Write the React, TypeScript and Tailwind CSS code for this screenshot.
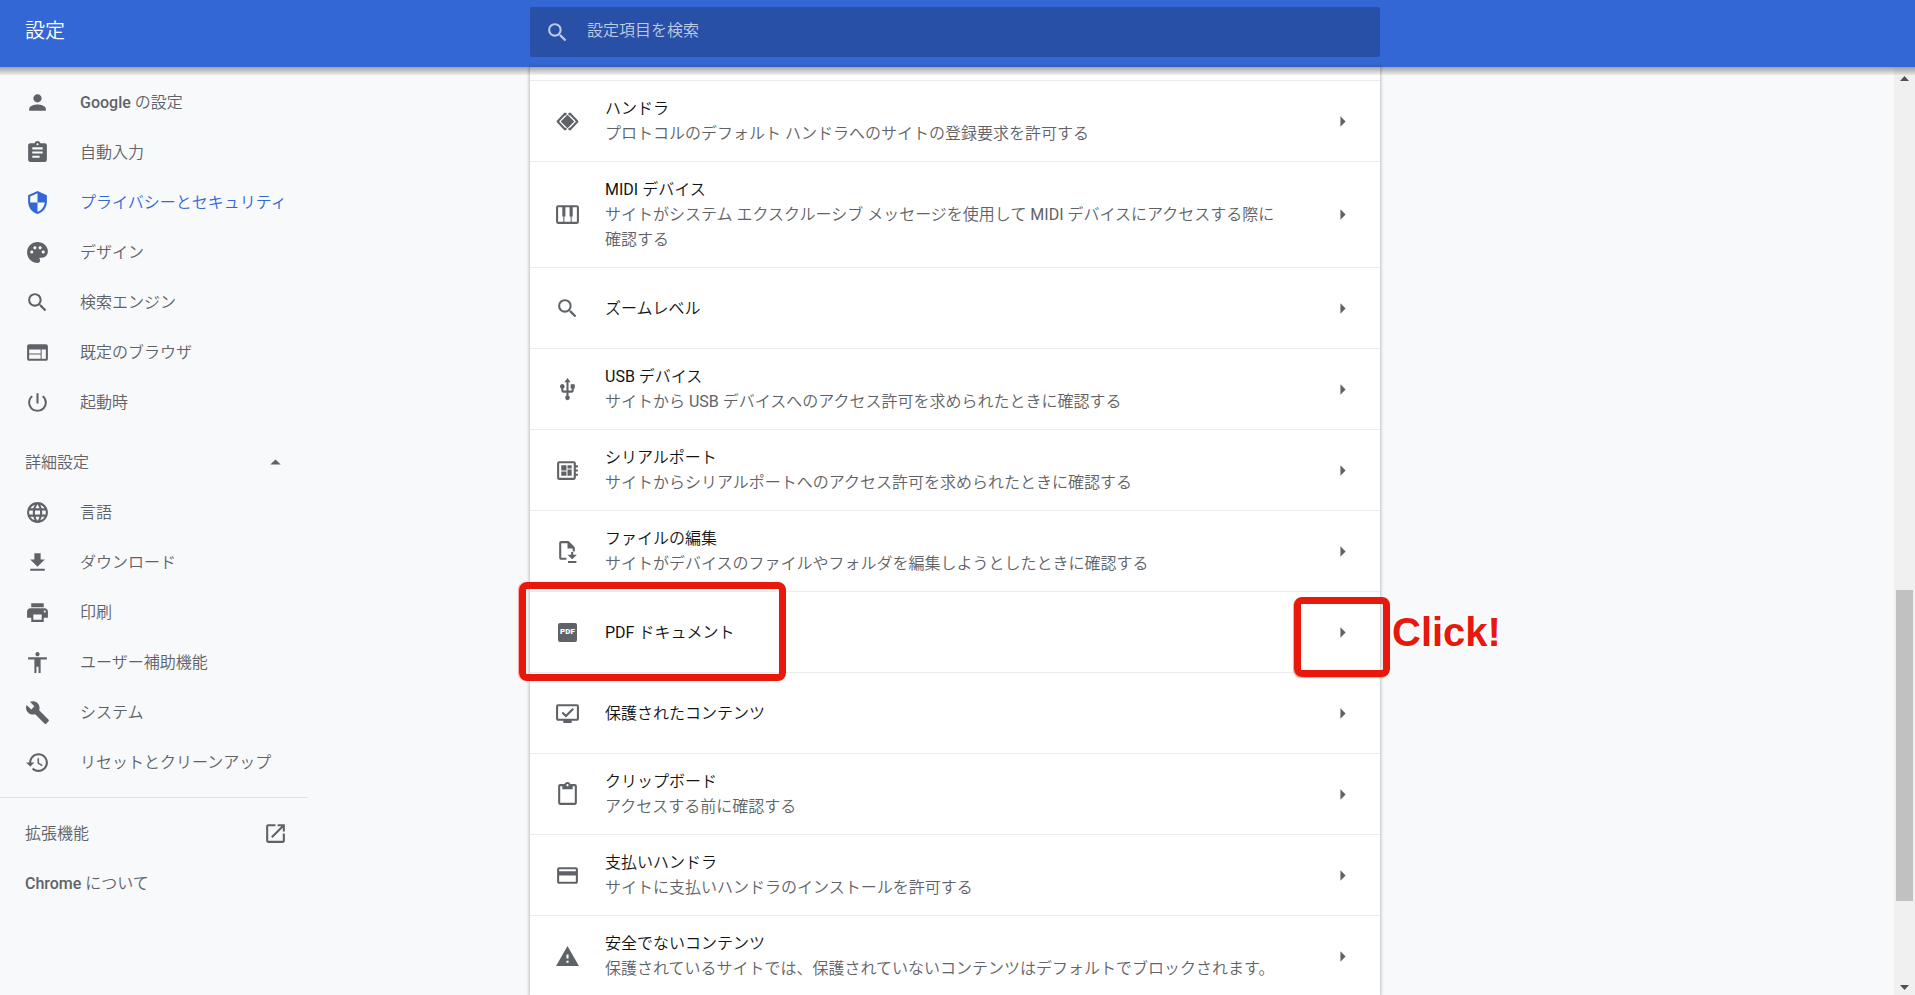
import type { ReactNode } from "react";
import {
  MdAccessibility,
  MdArrowDropUp,
  MdArrowRight,
  MdAssignment,
  MdBuild,
  MdContentPaste,
  MdCreditCard,
  MdDeveloperBoard,
  MdLanguage,
  MdOpenInNew,
  MdPalette,
  MdPerson,
  MdPowerSettingsNew,
  MdPrint,
  MdSearch,
  MdUsb,
  MdWarning,
  MdWeb,
} from "react-icons/md";

function Icon({ children }: { children: ReactNode }) {
  return (
    <svg viewBox="0 0 24 24" className="size-[25px]" fill="currentColor" aria-hidden="true">
      {children}
    </svg>
  );
}

const icon = "size-[25px]";

const basicItems = [
  { label: "Google の設定", icon: <MdPerson className={icon} /> },
  { label: "自動入力", icon: <MdAssignment className={icon} /> },
  {
    label: "プライバシーとセキュリティ",
    active: true,
    icon: (
      <Icon>
        <path d="M12 1L3 5v6c0 5.55 3.84 10.74 9 12 5.16-1.26 9-6.45 9-12V5l-9-4zm0 10.99h7c-.53 4.12-3.28 7.79-7 8.94V12H5V6.3l7-3.11v8.8z" />
      </Icon>
    ),
  },
  { label: "デザイン", icon: <MdPalette className={icon} /> },
  { label: "検索エンジン", icon: <MdSearch className={icon} /> },
  { label: "既定のブラウザ", icon: <MdWeb className={icon} /> },
  { label: "起動時", icon: <MdPowerSettingsNew className={icon} /> },
];

const advancedItems = [
  { label: "言語", icon: <MdLanguage className={icon} /> },
  {
    label: "ダウンロード",
    icon: (
      <Icon>
        <path d="M19 9h-4V3H9v6H5l7 7 7-7zM5 18v2h14v-2H5z" />
      </Icon>
    ),
  },
  { label: "印刷", icon: <MdPrint className={icon} /> },
  { label: "ユーザー補助機能", icon: <MdAccessibility className={icon} /> },
  { label: "システム", icon: <MdBuild className={icon} /> },
  {
    label: "リセットとクリーンアップ",
    icon: (
      <Icon>
        <path d="M13 3c-4.97 0-9 4.03-9 9H1l3.89 3.89.07.14L9 12H6c0-3.87 3.13-7 7-7s7 3.13 7 7-3.13 7-7 7c-1.93 0-3.68-.79-4.94-2.06l-1.42 1.42C8.27 19.99 10.51 21 13 21c4.97 0 9-4.03 9-9s-4.03-9-9-9zm-1 5v5l4.28 2.54.72-1.21-3.5-2.08V8H12z" />
      </Icon>
    ),
  },
];

const siteSettings = [
  {
    title: "ハンドラ",
    detail: "プロトコルのデフォルト ハンドラへのサイトの登録要求を許可する",
    icon: (
      <Icon>
        <path d="M12 5.5l6.5 6.5-6.5 6.5L5.5 12z" />
        <path
          d="M11 5.5L9.5 4.500 2.500 12l7 7.500L11 18.5M13 5.5l1.500-1L21.500 12l-7 7.500L13 18.5"
          fill="none"
          stroke="currentColor"
          strokeWidth="2"
          strokeLinejoin="round"
        />
      </Icon>
    ),
  },
  {
    title: "MIDI デバイス",
    detail: "サイトがシステム エクスクルーシブ メッセージを使用して MIDI デバイスにアクセスする際に確認する",
    icon: (
      <Icon>
        <rect x="2" y="4" width="20" height="16" rx="1" fill="none" stroke="currentColor" strokeWidth="2" />
        <path d="M7 4h3v10H7zM14 4h3v10h-3zM8 14h1v6H8zM15 14h1v6h-1z" />
      </Icon>
    ),
  },
  { title: "ズームレベル", icon: <MdSearch className={icon} /> },
  {
    title: "USB デバイス",
    detail: "サイトから USB デバイスへのアクセス許可を求められたときに確認する",
    icon: <MdUsb className={icon} />,
  },
  {
    title: "シリアルポート",
    detail: "サイトからシリアルポートへのアクセス許可を求められたときに確認する",
    icon: <MdDeveloperBoard className={icon} />,
  },
  {
    title: "ファイルの編集",
    detail: "サイトがデバイスのファイルやフォルダを編集しようとしたときに確認する",
    icon: (
      <Icon>
        <path d="M11 18H6V4h6v5h5v3h2V8l-6-6H6c-1.100 0-2 .900-2 2v14c0 1.100.9 2 2 2h5z" />
        <path d="M15.500 12.500h2V15H21l-4.500 4.500L12 15h3.500zM12.500 21h8v2h-8z" />
      </Icon>
    ),
  },
  {
    title: "PDF ドキュメント",
    marked: true,
    icon: (
      <span className="flex size-[19px] items-center justify-center rounded-xs bg-[#5f6368] text-[8px] font-black leading-none text-white">
        PDF
      </span>
    ),
  },
  {
    title: "保護されたコンテンツ",
    icon: (
      <Icon>
        <path d="M21 3H3c-1.100 0-2 .900-2 2v12c0 1.100.9 2 2 2h5v2h8v-2h5c1.100 0 2-.9 2-2V5c0-1.100-.9-2-2-2zm0 14H3V5h18v12z" />
        <path d="M7 11l3.500 3.500L17.500 7.500" fill="none" stroke="currentColor" strokeWidth="2" />
      </Icon>
    ),
  },
  { title: "クリップボード", detail: "アクセスする前に確認する", icon: <MdContentPaste className={icon} /> },
  {
    title: "支払いハンドラ",
    detail: "サイトに支払いハンドラのインストールを許可する",
    icon: <MdCreditCard className={icon} />,
  },
  {
    title: "安全でないコンテンツ",
    detail: "保護されているサイトでは、保護されていないコンテンツはデフォルトでブロックされます。",
    icon: <MdWarning className={icon} />,
  },
];

type MenuItemProps = { label: string; icon: ReactNode; active?: boolean };

function MenuItem({ label, icon, active }: MenuItemProps) {
  return (
    <a href="#" className={`flex h-[50px] items-center gap-[30px] pl-[25px] ${active ? "text-[#3367d6]" : ""}`}>
      {icon}
      <span>{label}</span>
    </a>
  );
}

function Sidebar() {
  return (
    <nav className="w-[308px] pt-[10px] font-medium text-[#5f6368]">
      {basicItems.map((item) => (
        <MenuItem key={item.label} {...item} />
      ))}
      <button className="mt-[10px] flex h-[50px] w-full items-center justify-between pl-[25px] pr-5">
        詳細設定
        <MdArrowDropUp className={icon} />
      </button>
      {advancedItems.map((item) => (
        <MenuItem key={item.label} {...item} />
      ))}
      <div className="mt-[10px] border-t border-[#e0e2e4] pt-[10px]">
        <a href="#" className="flex h-[50px] items-center justify-between pl-[25px] pr-5">
          拡張機能
          <MdOpenInNew className={icon} />
        </a>
        <a href="#" className="flex h-[50px] items-center pl-[25px]">
          Chrome について
        </a>
      </div>
    </nav>
  );
}

type SettingRowProps = { title: string; detail?: string; icon: ReactNode; marked?: boolean };

function SettingRow({ title, detail, icon: rowIcon, marked }: SettingRowProps) {
  return (
    <li className="relative border-t border-[#ebebeb]">
      <button className={`flex w-full items-center px-[25px] text-left ${detail ? "py-[15px]" : "h-[80px]"}`}>
        <span className="flex size-[25px] shrink-0 items-center justify-center text-[#5f6368]">{rowIcon}</span>
        <span className="ml-[25px] mr-[45px] flex-1">
          <span className="block text-[#111214]">{title}</span>
          {detail && <span className="block text-[#5f6368]">{detail}</span>}
        </span>
        <MdArrowRight className="size-[25px] shrink-0 text-[#5f6368]" />
      </button>
      {marked && (
        <>
          <div className="absolute -left-[11px] -top-[10px] z-10 h-[99px] w-[267px] rounded-lg border-[7px] border-[#e8180c] shadow-[-1px_0_1px_#f5a5a0]" />
          <div className="absolute -right-[10px] top-[5px] z-10 h-[80px] w-[96px] rounded-lg border-[7px] border-[#e8180c] shadow-[-1px_1px_1px_#f5a5a0]" />
          <span className="absolute left-full top-[15px] z-10 ml-3 font-['Liberation_Sans',sans-serif] text-[40px] font-bold leading-[50px] text-[#e8180c] [text-shadow:2px_0_1px_#fff,-2px_0_1px_#fff,0_2px_1px_#fff,0_-2px_1px_#fff]">
            Click!
          </span>
        </>
      )}
    </li>
  );
}

function ScrollBar() {
  return (
    <div className="absolute inset-y-0 right-0 flex w-[21px] flex-col items-center bg-[#f0f0f0] text-[#505050]">
      <svg viewBox="0 0 9 5" className="mt-[9px] h-[5px] w-[9px]" fill="currentColor" aria-hidden="true">
        <path d="M4.500 0L9 5H0z" />
      </svg>
      <div className="grid w-[17px] flex-1 grid-rows-[509fr_311fr_84fr]">
        <div className="row-start-2 bg-[#c1c1c1]" />
      </div>
      <svg viewBox="0 0 9 5" className="mb-[5px] h-[5px] w-[9px]" fill="currentColor" aria-hidden="true">
        <path d="M0 0h9L4.500 5z" />
      </svg>
    </div>
  );
}

export default function App() {
  return (
    <div
      lang="ja"
      className="flex h-screen flex-col overflow-hidden bg-[#f8f9fb] font-[Roboto,'Noto_Sans_CJK_JP_DemiLight','Noto_Sans_CJK_JP_Light','Noto_Sans_CJK_JP',sans-serif] text-[16px] leading-[25px]"
    >
      <header className="grid h-[67px] shrink-0 grid-cols-[minmax(308px,1fr)_minmax(0,850px)_1fr] bg-[#3367d6] pr-[5px] pt-[7px]">
        <h1 className="h-[50px] pl-[25px] text-[20px] font-normal leading-[48px] text-white">設定</h1>
        <label className="flex h-[50px] items-center gap-[17px] rounded-xs bg-[#2850a7] px-[15px] text-[#bfcbe6]">
          <MdSearch className={icon} />
          <input
            type="search"
            aria-label="設定項目を検索"
            placeholder="設定項目を検索"
            className="h-full flex-1 bg-transparent pb-1 outline-none placeholder:text-[#bfcbe6]"
          />
        </label>
      </header>
      <div className="relative min-h-0 flex-1">
        <div className="grid h-full grid-cols-[minmax(308px,1fr)_minmax(0,850px)_1fr] pr-[5px]">
          <Sidebar />
          <main className="h-full bg-white pt-[13px] shadow-[0_0_3px_1px_rgba(60,64,67,0.3)]">
            <ul>
              {siteSettings.map((setting) => (
                <SettingRow key={setting.title} {...setting} />
              ))}
            </ul>
          </main>
        </div>
        <ScrollBar />
        <div className="absolute inset-x-0 top-0 h-2 bg-linear-to-b from-black/35 to-black/5" />
      </div>
    </div>
  );
}
